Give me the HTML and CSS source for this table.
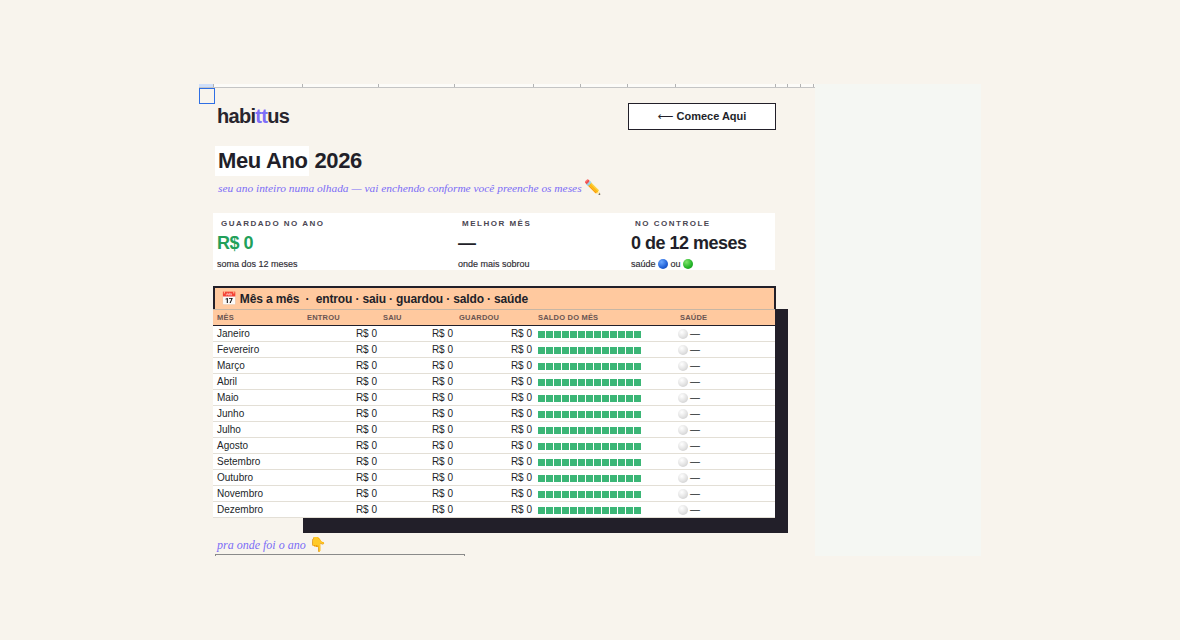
FILE: index.html
```html
<!DOCTYPE html>
<html lang="pt-BR">
<head>
<meta charset="utf-8">
<title>Meu Ano 2026 — habittus</title>
<link rel="stylesheet" href="styles.css">
</head>
<body>
<div class="stage">
  <div class="app">
    <main class="main">
      <div class="ruler">
        <span></span><span></span><span></span><span></span><span></span><span></span>
        <span></span><span></span><span></span><span></span><span></span><span></span>
      </div>
      <div class="sel-box"></div>
      <div class="content">
        <header class="topbar">
          <div class="logo">habi<span class="tt">tt</span>us</div>
          <button class="cta"><span class="arrow">⟵</span> Comece Aqui</button>
        </header>

        <h1 class="title"><span class="hl">Meu Ano</span> 2026</h1>
        <p class="subtitle">seu ano inteiro numa olhada — vai enchendo conforme você preenche os meses <span class="emoji">✏️</span></p>

        <section class="stats">
          <div class="stat">
            <div class="stat-label">Guardado no ano</div>
            <div class="stat-value green">R$ 0</div>
            <div class="stat-sub">soma dos 12 meses</div>
          </div>
          <div class="stat">
            <div class="stat-label">Melhor mês</div>
            <div class="stat-value">—</div>
            <div class="stat-sub">onde mais sobrou</div>
          </div>
          <div class="stat">
            <div class="stat-label">No controle</div>
            <div class="stat-value">0 de 12 meses</div>
            <div class="stat-sub">saúde <span class="dot blue"></span> ou <span class="dot green-dot"></span></div>
          </div>
        </section>

        <section class="year">
          <div class="shadow"></div>
          <div class="year-title"><span class="emoji cal">📅</span><span>Mês a mês &nbsp;·&nbsp; entrou · saiu · guardou · saldo · saúde</span></div>
          <table class="months">
            <colgroup>
              <col class="c-mes"><col class="c-in"><col class="c-out"><col class="c-save"><col class="c-bal"><col class="c-health">
            </colgroup>
            <thead>
              <tr><th>Mês</th><th>Entrou</th><th>Saiu</th><th>Guardou</th><th>Saldo do mês</th><th>Saúde</th></tr>
            </thead>
            <tbody>
              <tr><td>Janeiro</td><td class="num">R$ 0</td><td class="num">R$ 0</td><td class="num">R$ 0</td><td class="bal"><span class="bar"></span></td><td class="health"><span class="ball"></span>—</td></tr>
              <tr><td>Fevereiro</td><td class="num">R$ 0</td><td class="num">R$ 0</td><td class="num">R$ 0</td><td class="bal"><span class="bar"></span></td><td class="health"><span class="ball"></span>—</td></tr>
              <tr><td>Março</td><td class="num">R$ 0</td><td class="num">R$ 0</td><td class="num">R$ 0</td><td class="bal"><span class="bar"></span></td><td class="health"><span class="ball"></span>—</td></tr>
              <tr><td>Abril</td><td class="num">R$ 0</td><td class="num">R$ 0</td><td class="num">R$ 0</td><td class="bal"><span class="bar"></span></td><td class="health"><span class="ball"></span>—</td></tr>
              <tr><td>Maio</td><td class="num">R$ 0</td><td class="num">R$ 0</td><td class="num">R$ 0</td><td class="bal"><span class="bar"></span></td><td class="health"><span class="ball"></span>—</td></tr>
              <tr><td>Junho</td><td class="num">R$ 0</td><td class="num">R$ 0</td><td class="num">R$ 0</td><td class="bal"><span class="bar"></span></td><td class="health"><span class="ball"></span>—</td></tr>
              <tr><td>Julho</td><td class="num">R$ 0</td><td class="num">R$ 0</td><td class="num">R$ 0</td><td class="bal"><span class="bar"></span></td><td class="health"><span class="ball"></span>—</td></tr>
              <tr><td>Agosto</td><td class="num">R$ 0</td><td class="num">R$ 0</td><td class="num">R$ 0</td><td class="bal"><span class="bar"></span></td><td class="health"><span class="ball"></span>—</td></tr>
              <tr><td>Setembro</td><td class="num">R$ 0</td><td class="num">R$ 0</td><td class="num">R$ 0</td><td class="bal"><span class="bar"></span></td><td class="health"><span class="ball"></span>—</td></tr>
              <tr><td>Outubro</td><td class="num">R$ 0</td><td class="num">R$ 0</td><td class="num">R$ 0</td><td class="bal"><span class="bar"></span></td><td class="health"><span class="ball"></span>—</td></tr>
              <tr><td>Novembro</td><td class="num">R$ 0</td><td class="num">R$ 0</td><td class="num">R$ 0</td><td class="bal"><span class="bar"></span></td><td class="health"><span class="ball"></span>—</td></tr>
              <tr><td>Dezembro</td><td class="num">R$ 0</td><td class="num">R$ 0</td><td class="num">R$ 0</td><td class="bal"><span class="bar"></span></td><td class="health"><span class="ball"></span>—</td></tr>
            </tbody>
          </table>
        </section>

        <p class="note">pra onde foi o ano <span class="emoji">👇</span></p>
        <div class="chart-box"></div>
      </div>
    </main>
    <aside class="side"></aside>
  </div>
</div>
</body>
</html>
```

FILE: styles.css
```css
* { box-sizing: border-box; }
html, body { margin: 0; padding: 0; }
body {
  background: #f8f4ed;
  font-family: "Liberation Sans", Arial, sans-serif;
  color: #221f29;
}
.stage {
  width: 1180px;
  height: 640px;
  display: flex;
  align-items: center;
  justify-content: center;
}
.app {
  width: 782px;
  height: 472px;
  display: flex;
  overflow: hidden;
}
.main {
  width: 616px;
  flex: none;
  position: relative;
  overflow: hidden;
  background: #f8f4ed;
}
.side {
  flex: 1;
  background: #f5f7f3;
}

/* ruler */
.ruler {
  display: flex;
  height: 4px;
  background: #fcfbf8;
  border-bottom: 1px solid #c4c4c4;
}
.ruler span {
  flex: none;
  height: 100%;
  border-right: 1px solid #b3b3b3;
}
.ruler span:nth-child(1) { width: 15px; background: #cfdffa; }
.ruler span:nth-child(2) { width: 89px; }
.ruler span:nth-child(3) { width: 76px; }
.ruler span:nth-child(4) { width: 76px; }
.ruler span:nth-child(5) { width: 79px; }
.ruler span:nth-child(6) { width: 47px; }
.ruler span:nth-child(7) { width: 47px; }
.ruler span:nth-child(8) { width: 48px; }
.ruler span:nth-child(9) { width: 100px; }
.ruler span:nth-child(10) { width: 12px; }
.ruler span:nth-child(11) { width: 13px; }
.ruler span:nth-child(12) { width: 13px; }

.sel-box {
  position: absolute;
  left: 0;
  top: 4px;
  width: 16px;
  height: 16px;
  border: 1px solid #2f6fe4;
}

.content {
  width: 577px;
  padding-left: 14px;
}

/* top bar */
.topbar {
  margin-top: 15px;
  height: 27px;
  display: flex;
  align-items: center;
  justify-content: space-between;
}
.logo {
  margin-left: 4px;
  font-size: 20px;
  font-weight: 700;
  letter-spacing: -0.7px;
  color: #28252d;
}
.logo .tt { color: #7d6ef7; }
.cta {
  width: 148px;
  height: 27px;
  background: #fff;
  border: 1.5px solid #221f29;
  font-family: "Liberation Sans", Arial, sans-serif;
  font-size: 11px;
  font-weight: 700;
  color: #221f29;
  padding: 0;
}
.cta .arrow {
  font-family: "DejaVu Sans", sans-serif;
  font-size: 11px;
  font-weight: 400;
}

/* title */
.title {
  margin: 16px 0 0 2px;
  height: 30px;
  font-size: 22px;
  line-height: 30px;
  font-weight: 700;
  letter-spacing: -0.35px;
  color: #221f29;
}
.title .hl {
  display: inline-block;
  background: #fff;
  padding-left: 3px;
  padding-right: 1px;
}
.subtitle {
  margin: 5px 0 0 5px;
  font-family: "Liberation Serif", "Times New Roman", serif;
  font-style: italic;
  font-size: 11.4px;
  line-height: 14px;
  color: #7b6cf6;
}
.emoji {
  font-style: normal;
  font-size: 14px;
}

/* stats */
.stats {
  margin-top: 18px;
  width: 562px;
  height: 57px;
  background: #fff;
  display: grid;
  grid-template-columns: 241px 173px 1fr;
  padding-top: 5px;
}
.stat { padding-left: 4px; }
.stat-label {
  padding-left: 4px;
  font-size: 8px;
  line-height: 12px;
  font-weight: 700;
  letter-spacing: 1.5px;
  text-transform: uppercase;
  color: #4a4652;
}
.stat-value {
  margin-top: 2px;
  font-size: 18px;
  line-height: 22px;
  font-weight: 700;
  letter-spacing: -0.5px;
  color: #221f29;
}
.stat-value.green { color: #22a05a; }
.stat-sub {
  margin-top: 4px;
  font-size: 9px;
  line-height: 12px;
  color: #2e2b33;
  -webkit-text-stroke: 0.15px #2e2b33;
}
.dot {
  display: inline-block;
  width: 10px;
  height: 10px;
  border-radius: 50%;
  vertical-align: -2px;
}
.dot.blue { background: radial-gradient(circle at 35% 30%, #6aa7ff, #1f5fd6 60%, #1440a0); }
.dot.green-dot { background: radial-gradient(circle at 35% 30%, #7ee36c, #22b327 60%, #158a1b); }

/* year table */
.year {
  margin-top: 16px;
  position: relative;
  width: 563px;
}
.shadow {
  position: absolute;
  left: 90px;
  top: 23px;
  width: 485px;
  height: 224px;
  background: #221f29;
}
.year-title {
  position: relative;
  height: 23px;
  border: 2px solid #221f29;
  border-bottom: 0;
  background: #ffc99f;
  display: flex;
  align-items: center;
  gap: 3px;
  padding-left: 6px;
  font-size: 12px;
  font-weight: 700;
  letter-spacing: -0.15px;
}
.year-title .cal { font-size: 13px; }
.months {
  position: relative;
  width: 562px;
  border-collapse: separate;
  border-spacing: 0;
  table-layout: fixed;
}
.c-mes { width: 90px; }
.c-in { width: 76px; }
.c-out { width: 76px; }
.c-save { width: 79px; }
.c-bal { width: 142px; }
.c-health { width: 99px; }
.months th {
  background: #ffc99f;
  border-top: 1px solid #c7b6a4;
  border-bottom: 1px solid #221f29;
  height: 17px;
  line-height: 15px;
  padding: 0 0 0 4px;
  text-align: left;
  font-size: 7.5px;
  font-weight: 700;
  letter-spacing: 0.2px;
  text-transform: uppercase;
  color: #6a5552;
}
.months td {
  background: #fff;
  border-bottom: 1px solid #e3dfd6;
  height: 16px;
  line-height: 15px;
  padding: 0 0 0 4px;
  font-size: 10px;
  color: #221f29;
  white-space: nowrap;
}
.months td.num {
  text-align: right;
  padding: 0 2px 0 0;
}
.bar {
  display: inline-block;
  width: 103px;
  height: 7px;
  vertical-align: -0.5px;
  background: repeating-linear-gradient(to right, #3bb676 0 7px, transparent 7px 8px);
}
.months td.health { padding-left: 2px; }
.ball {
  display: inline-block;
  width: 10px;
  height: 10px;
  border-radius: 50%;
  margin-right: 2px;
  vertical-align: -1.5px;
  background: radial-gradient(circle at 38% 32%, #ffffff, #e2e2e2 55%, #c4c4c4);
}

.note {
  margin: 20px 0 0 4px;
  font-family: "Liberation Serif", "Times New Roman", serif;
  font-style: italic;
  font-size: 12px;
  line-height: 14px;
  color: #7b6cf6;
}
.chart-box {
  margin: 2px 0 0 2px;
  width: 250px;
  height: 40px;
  border: 1px solid #8a8a8a;
}
```
